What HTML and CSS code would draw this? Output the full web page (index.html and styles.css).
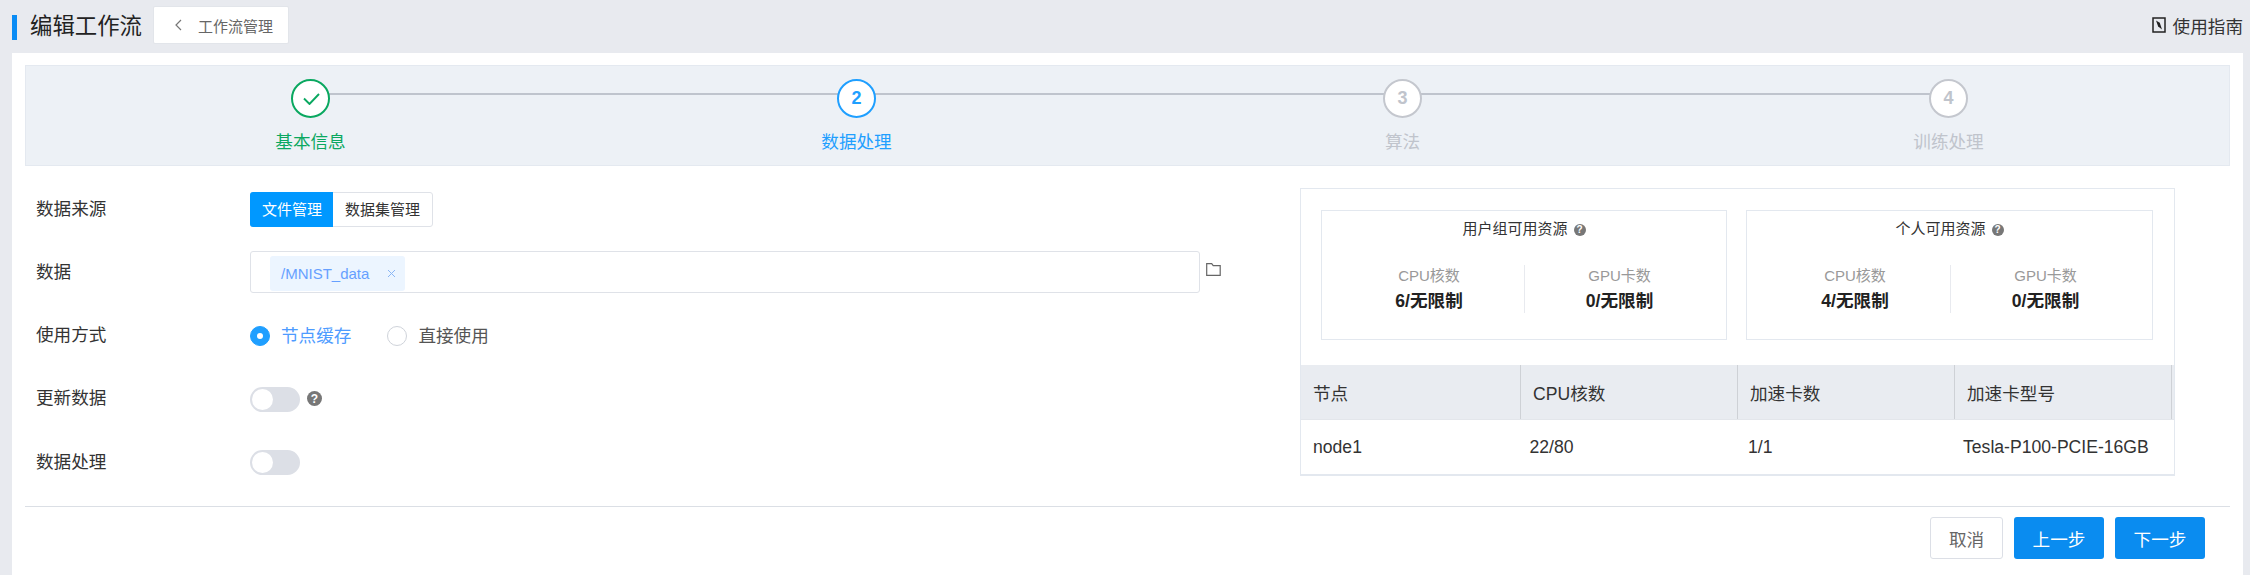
FILE: index.html
```html
<!DOCTYPE html>
<html lang="zh-CN">
<head>
<meta charset="utf-8">
<title>编辑工作流</title>
<link rel="stylesheet" href="styles.css">
</head>
<body>
<header class="topbar">
  <span class="title-mark"></span>
  <h1 class="title">编辑工作流</h1>
  <a class="back"><svg class="back-icon" width="7" height="12" viewBox="0 0 7 12"><path d="M6 1 1 6l5 5" fill="none" stroke="#777" stroke-width="1.2"/></svg><span>工作流管理</span></a>
  <a class="guide"><svg width="14" height="16" viewBox="0 0 14 16"><rect x="1" y="1" width="12" height="14" fill="none" stroke="#222" stroke-width="1.5"/><path d="M4 3.5 7.8 5.8 10 12.5 6.2 9.6z" fill="#222"/></svg><span>使用指南</span></a>
</header>
<main class="content">
  <ol class="steps">
    <li class="step done"><span class="circle"><svg class="check" width="17" height="13" viewBox="0 0 17 13"><path d="M1 6.5l5.5 5.5L16 2" fill="none" stroke="#0aa860" stroke-width="1.9"/></svg></span><span class="step-label">基本信息</span></li>
    <li class="step active"><span class="circle">2</span><span class="step-label">数据处理</span></li>
    <li class="step"><span class="circle">3</span><span class="step-label">算法</span></li>
    <li class="step last"><span class="circle">4</span><span class="step-label">训练处理</span></li>
  </ol>
  <section class="body">
    <form class="form">
      <div class="row"><label class="label">数据来源</label>
        <div class="seg"><span class="seg-item on">文件管理</span><span class="seg-item">数据集管理</span></div>
      </div>
      <div class="row"><label class="label">数据</label>
        <div class="input"><span class="tag">/MNIST_data<svg class="tag-x" width="9" height="9" viewBox="0 0 9 9"><path d="M1 1l7 7M8 1 1 8" stroke="#8ab6f5" stroke-width="1"/></svg></span></div>
        <svg class="folder" width="15" height="13" viewBox="0 0 15 13"><path d="M.7.7h5l1.5 2h7v9.6H.7z" fill="none" stroke="#666" stroke-width="1.2"/></svg>
      </div>
      <div class="row"><label class="label">使用方式</label>
        <span class="radio on"></span><span class="radio-text on">节点缓存</span>
        <span class="radio second"></span><span class="radio-text">直接使用</span>
      </div>
      <div class="row"><label class="label">更新数据</label>
        <span class="switch"></span><span class="help big">?</span>
      </div>
      <div class="row"><label class="label">数据处理</label>
        <span class="switch"></span>
      </div>
    </form>
    <aside class="panel">
      <div class="boxes">
        <div class="box">
          <div class="box-title">用户组可用资源<span class="help">?</span></div>
          <div class="stats">
            <div class="stat"><div class="stat-name">CPU核数</div><div class="stat-val">6/无限制</div></div>
            <div class="stat"><div class="stat-name">GPU卡数</div><div class="stat-val">0/无限制</div></div>
          </div>
        </div>
        <div class="box wide">
          <div class="box-title">个人可用资源<span class="help">?</span></div>
          <div class="stats">
            <div class="stat"><div class="stat-name">CPU核数</div><div class="stat-val">4/无限制</div></div>
            <div class="stat"><div class="stat-name">GPU卡数</div><div class="stat-val">0/无限制</div></div>
          </div>
        </div>
      </div>
      <div class="thead"><span>节点</span><span>CPU核数</span><span>加速卡数</span><span>加速卡型号</span></div>
      <div class="trow"><span>node1</span><span>22/80</span><span>1/1</span><span>Tesla-P100-PCIE-16GB</span></div>
    </aside>
  </section>
  <footer class="footer">
    <button class="btn plain" type="button">取消</button>
    <button class="btn primary" type="button">上一步</button>
    <button class="btn primary" type="button">下一步</button>
  </footer>
</main>
</body>
</html>
```
FILE: styles.css
```css
* { box-sizing: border-box; }
html, body { margin: 0; padding: 0; }
body {
  width: 2250px;
  height: 575px;
  overflow: hidden;
  background: #e8eaef;
  font-family: "Liberation Sans", "Noto Sans CJK SC", sans-serif;
  color: #333;
  font-size: 17.6px;
}
.topbar {
  height: 53px;
  display: flex;
  align-items: center;
  padding: 0 7px 0 12px;
}
.title-mark { width: 5px; height: 25px; background: #0a8cf5; margin-top: 1px; }
.title { margin: 0 11px 0 13px; font-size: 22.4px; font-weight: 400; color: #222; line-height: 26px; }
.back {
  width: 136px;
  height: 38px;
  margin-top: -3px;
  background: #fff;
  border-radius: 2px;
  border: 1px solid #e2e5ea;
  display: flex;
  align-items: center;
  padding-left: 21px;
  font-size: 15px;
  color: #666;
}
.back-icon { margin-right: 16px; }
.guide { margin-left: auto; display: flex; align-items: center; gap: 7px; color: #333; margin-top: -3px; }
.content {
  margin: 0 7px 0 12px;
  height: 522px;
  background: #fff;
  padding: 12px 13px 0;
}
.steps {
  list-style: none;
  margin: 0;
  height: 101px;
  padding: 13px 0 0 11.5px;
  display: grid;
  grid-template-columns: repeat(4, 546px);
  background: #edf1f6;
  border: 1px solid #e4e9f0;
}
.step { position: relative; display: flex; flex-direction: column; align-items: center; color: #c0c4cc; }
.step::after {
  content: "";
  position: absolute;
  top: 14px;
  left: 50%;
  width: 100%;
  height: 2px;
  background: #bfc4cd;
}
.step.last::after { display: none; }
.circle {
  position: relative;
  z-index: 1;
  width: 39px;
  height: 39px;
  border-radius: 50%;
  border: 2px solid #c4c7ce;
  background: #fff;
  display: flex;
  align-items: center;
  justify-content: center;
  font-size: 18px;
  font-weight: 700;
  color: #c0c4cc;
}
.check { margin-left: 2px; }
.step-label { margin-top: 12px; line-height: 24px; }
.done .circle { border-color: #0aa860; }
.done .step-label { color: #0aa860; }
.active .circle { border-color: #1f9fff; color: #1f9fff; }
.active .step-label { color: #1f9fff; }
.body { display: flex; height: 340px; }
.form { width: 1275px; padding: 11.5px 0 0 11px; }
.row { height: 63.25px; display: flex; align-items: center; }
.label { width: 214px; margin-top: -4px; color: #333; }
.seg { display: flex; height: 35px; font-size: 15px; border-radius: 3px; border: 1px solid #dfe2e8; margin-top: 1px; }
.seg-item { padding: 0 12px; line-height: 33px; color: #333; }
.seg-item.on { background: #0098ff; color: #fff; margin: -1px 0 -1px -1px; padding: 0 11px 0 12px; line-height: 35px; border-radius: 3px 0 0 3px; }
.input { width: 950px; height: 42px; border: 1px solid #dfe2e8; border-radius: 3px; padding: 4px 19px; }
.tag { display: inline-flex; align-items: center; width: 135px; height: 35px; background: #ecf5ff; border-radius: 3px; padding-left: 11px; color: #66a0ff; font-size: 15px; }
.tag-x { margin-left: 18px; }
.folder { margin-left: 6px; margin-top: -5px; }
.radio { width: 20px; height: 20px; border-radius: 50%; border: 1px solid #cfd3da; background: #fff; display: flex; align-items: center; justify-content: center; }
.radio.on { background: #1f9fff; border-color: #1f9fff; }
.radio.on::after { content: ""; width: 6px; height: 6px; border-radius: 50%; background: #fff; }
.radio.second { margin-left: 36px; }
.radio-text { margin-left: 11px; color: #555; margin-top: -3px; }
.radio-text.on { color: #4d9bff; }
.switch { position: relative; width: 50px; height: 25px; border-radius: 13px; background: #dcdfe6; margin-top: 1px; }
.switch::after { content: ""; position: absolute; left: 2px; top: 2px; width: 21px; height: 21px; border-radius: 50%; background: #fff; }
.help {
  display: inline-flex;
  align-items: center;
  justify-content: center;
  width: 12px;
  height: 12px;
  margin-left: 6px;
  border-radius: 50%;
  background: #777;
  color: #fff;
  font-size: 10px;
  font-weight: 700;
  vertical-align: 1px;
}
.help.big { width: 15px; height: 15px; font-size: 12px; margin-left: 7px; }
.panel { width: 875px; height: 288px; margin-top: 22px; border: 1px solid #e3e8ef; border-bottom-width: 2px; }
.boxes { display: flex; gap: 19px; padding: 21px 20px 25px; }
.box { width: 406px; height: 130px; border: 1px solid #e3e8ef; padding-top: 6px; }
.box.wide { width: 407px; }
.box-title { text-align: center; font-size: 15px; line-height: 24px; color: #333; }
.stats { display: flex; padding: 0 12px; margin-top: 24px; }
.wide .stats { padding-left: 13px; }
.stat { width: 189px; height: 48px; text-align: center; }
.stat:first-child { width: 191px; border-right: 1px solid #e8eaef; }
.stat-name { font-size: 15px; line-height: 22px; color: #999; }
.stat-val { margin-top: 2px; font-size: 17.6px; line-height: 24px; font-weight: 700; color: #222; }
.thead { display: grid; grid-template-columns: 220px 217px 217px 217px; height: 55px; background: #e9ecf1; border-bottom: 1px solid #e3e6eb; color: #333; }
.thead span { display: flex; align-items: center; padding-left: 12px; border-right: 1px solid #ced1d6; }
.trow { display: grid; grid-template-columns: 216.5px 218.5px 215px auto; height: 54px; align-items: center; padding-left: 12px; font-size: 17.6px; color: #333; }
.footer { border-top: 1px solid #dbdfe5; padding: 10px 25px 0 0; display: flex; justify-content: flex-end; gap: 11px; }
.btn { height: 42px; border-radius: 3px; font: inherit; font-size: 17.6px; padding: 0; }
.plain { width: 73px; background: #fff; border: 1px solid #dcdfe6; color: #666; }
.primary { width: 90px; background: #0a8cf0; border: 0; color: #fff; }
```
